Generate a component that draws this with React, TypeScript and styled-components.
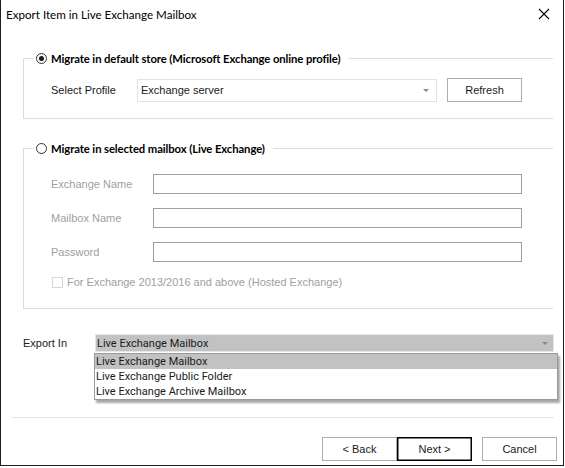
import styled, { createGlobalStyle, css } from "styled-components";

const GlobalStyle = createGlobalStyle`
  html, body {
    margin: 0;
    padding: 0;
    background: #ffffff;
  }
  body {
    font-family: "Liberation Sans", Arial, sans-serif;
    font-size: 11px;
    color: #000;
  }
`;

export default function App() {
  return (
    <>
      <GlobalStyle />
      <Window>
        <TitleBar>
          <Title>Export Item in Live Exchange Mailbox</Title>
          <CloseButton>
            <svg width="12" height="12" viewBox="0 0 12 12">
              <path d="M1 1 L11 11 M11 1 L1 11" stroke="#000" strokeWidth="1.1" />
            </svg>
          </CloseButton>
        </TitleBar>

        <Content>
          <Group $height={67}>
            <Legend>
              <Radio $checked />
              <LegendText>Migrate in default store (Microsoft Exchange online profile)</LegendText>
            </Legend>
            <GroupBody $top={13}>
              <Row>
                <Label $width={86}>Select Profile</Label>
                <ComboBox>
                  <span>Exchange server</span>
                  <SmallArrow />
                </ComboBox>
                <Button $width={75} $left={10}>Refresh</Button>
              </Row>
            </GroupBody>
          </Group>

          <Group $height={167} $gap={23}>
            <Legend>
              <Radio />
              <LegendText>Migrate in selected mailbox (Live Exchange)</LegendText>
            </Legend>
            <GroupBody $top={19}>
              <Fields>
                <Row>
                  <Label $width={102} $disabled>Exchange Name</Label>
                  <TextBox />
                </Row>
                <Row>
                  <Label $width={102} $disabled>Mailbox Name</Label>
                  <TextBox />
                </Row>
                <Row>
                  <Label $width={102} $disabled>Password</Label>
                  <TextBox />
                </Row>
                <CheckRow>
                  <CheckBox />
                  <Label $disabled>For Exchange 2013/2016 and above (Hosted Exchange)</Label>
                </CheckRow>
              </Fields>
            </GroupBody>
          </Group>

          <ExportRow>
            <Label $width={72}>Export In</Label>
            <ExportCombo>
              <ExportValue>
                <span>Live Exchange Mailbox</span>
                <SmallArrow />
              </ExportValue>
              <DropList>
                <DropItem $selected>Live Exchange Mailbox</DropItem>
                <DropItem>Live Exchange Public Folder</DropItem>
                <DropItem>Live Exchange Archive Mailbox</DropItem>
              </DropList>
            </ExportCombo>
          </ExportRow>
        </Content>

        <Separator />

        <Footer>
          <Button $width={75}>&lt; Back</Button>
          <Button $width={75} $default>Next &gt;</Button>
          <Button $width={75} $left={10}>Cancel</Button>
        </Footer>
      </Window>
    </>
  );
}

const Window = styled.div`
  width: 562px;
  height: 465px;
  border-left: 1px solid #1f1f1f;
  border-right: 1px solid #1f1f1f;
  border-bottom: 1px solid #1f1f1f;
  background: #fff;
  display: flex;
  flex-direction: column;
`;

const TitleBar = styled.div`
  height: 28px;
  display: flex;
  align-items: center;
  justify-content: space-between;
  padding: 0 13px 0 5px;
`;

const Title = styled.div`
  font-family: Lato, "Liberation Sans", sans-serif;
  font-size: 11.6px;
  color: #000;
  padding-top: 1px;
`;

const CloseButton = styled.div`
  width: 12px;
  height: 12px;
  display: flex;
`;

const Content = styled.div`
  padding: 24px 9px 0 22px;
  display: flex;
  flex-direction: column;
`;

const Group = styled.fieldset<{ $height: number; $gap?: number }>`
  margin: ${(p) => p.$gap ?? 0}px 0 0 0;
  padding: 0;
  border: 1px solid #dcdcdc;
  border-right: none;
  width: 530px;
  box-sizing: border-box;
  height: ${(p) => p.$height}px;
  min-width: 0;
`;

const Legend = styled.legend`
  margin-left: 10px;
  padding: 0 8px 0 2px;
  display: flex;
  align-items: center;
  gap: 4px;
`;

const GroupBody = styled.div<{ $top: number }>`
  padding: ${(p) => p.$top}px 0 0 27px;
`;

const Radio = styled.span<{ $checked?: boolean }>`
  width: 11px;
  height: 11px;
  border-radius: 50%;
  border: 1px solid #333;
  box-sizing: border-box;
  display: inline-flex;
  align-items: center;
  justify-content: center;
  ${(p) =>
    p.$checked &&
    css`
      &::after {
        content: "";
        width: 5px;
        height: 5px;
        border-radius: 50%;
        background: #1a1a1a;
      }
    `}
`;

const LegendText = styled.span`
  font-family: Lato, "Liberation Sans", sans-serif;
  font-weight: bold;
  font-size: 11.3px;
  letter-spacing: -0.1px;
  color: #000;
`;

const Row = styled.div`
  display: flex;
  align-items: center;
`;

const Label = styled.span<{ $width?: number; $disabled?: boolean }>`
  font-size: 11px;
  color: ${(p) => (p.$disabled ? "#a0a0a0" : "#1a1a1a")};
  ${(p) => p.$width && css`width: ${p.$width}px;`}
  flex-shrink: 0;
`;

const ComboBox = styled.div`
  width: 300px;
  height: 23px;
  box-sizing: border-box;
  border: 1px solid #e3e3e3;
  display: flex;
  align-items: center;
  justify-content: space-between;
  padding: 0 7px 0 3px;
  font-size: 11px;
  color: #1a1a1a;
`;

const SmallArrow = styled.span`
  width: 0;
  height: 0;
  border-left: 3px solid transparent;
  border-right: 3px solid transparent;
  border-top: 3px solid #8a8a8a;
`;

const Button = styled.div<{ $width: number; $default?: boolean; $left?: number }>`
  width: ${(p) => p.$width}px;
  height: 24px;
  margin-left: ${(p) => p.$left ?? 0}px;
  box-sizing: border-box;
  border: 1px solid ${(p) => (p.$default ? "#000" : "#adadad")};
  ${(p) => p.$default && css`box-shadow: inset 0 0 0 0.5px #000;`}
  background: #fff;
  display: flex;
  align-items: center;
  justify-content: center;
  font-size: 11px;
  color: #1a1a1a;
`;

const Fields = styled.div`
  display: flex;
  flex-direction: column;
  gap: 14px;
`;

const TextBox = styled.div`
  width: 369px;
  height: 20px;
  box-sizing: border-box;
  border: 1px solid #9f9f9f;
`;

const CheckRow = styled.div`
  display: flex;
  align-items: center;
  gap: 4px;
  padding-left: 1px;
`;

const CheckBox = styled.span`
  width: 11px;
  height: 11px;
  box-sizing: border-box;
  border: 1px solid #d5d5d5;
`;

const ExportRow = styled.div`
  display: flex;
  align-items: center;
  margin-top: 25px;
`;

const ExportCombo = styled.div`
  position: relative;
  width: 459px;
`;

const ExportValue = styled.div`
  height: 18px;
  box-sizing: border-box;
  background: #c2c2c2;
  border: 1px solid #e6e6e6;
  display: flex;
  align-items: center;
  justify-content: space-between;
  padding: 0 5px 0 1px;
  font-family: Roboto, "Liberation Sans", sans-serif;
  font-size: 11px;
  color: #1a1a1a;
`;

const DropList = styled.div`
  position: absolute;
  left: -1px;
  top: 19px;
  width: 464px;
  box-sizing: border-box;
  background: #fff;
  border: 1px solid #9a9a9a;
  box-shadow: 2px 3px 2px rgba(0, 0, 0, 0.35);
`;

const DropItem = styled.div<{ $selected?: boolean }>`
  height: 15px;
  line-height: 15px;
  padding-left: 1px;
  font-family: Roboto, "Liberation Sans", sans-serif;
  font-size: 11px;
  color: #1a1a1a;
  background: ${(p) => (p.$selected ? "#c2c2c2" : "transparent")};
`;

const Separator = styled.div`
  margin: 65px 9px 0 11px;
  height: 1px;
  background: #e3e3e3;
`;

const Footer = styled.div`
  display: flex;
  justify-content: flex-end;
  padding: 19px 6px 0 0;
`;
